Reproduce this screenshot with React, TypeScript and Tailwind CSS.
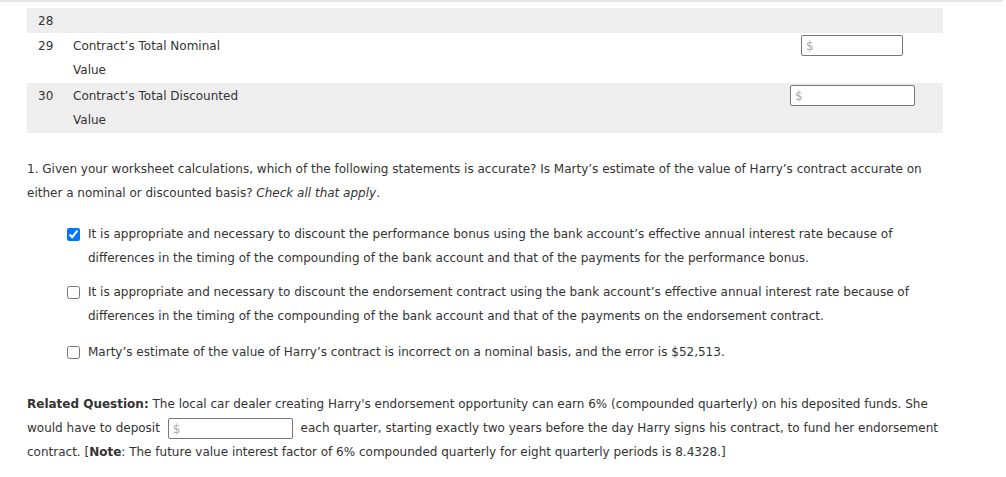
import React from "react";

const font = { fontFamily: '"DejaVu Sans", Verdana, sans-serif' };

function Dollar({ w }: { w: string }) {
  return (
    <div className={`${w} h-[21px] border border-[#777] rounded-[2px] bg-white flex items-center pl-[4px] text-[12px] text-[#aaa] leading-none`}>
      $
    </div>
  );
}

export default function App() {
  return (
    <div className="w-[1006px] h-[477px] bg-white text-[#333] text-[12px] overflow-hidden" style={font}>
      <div className="w-[1003px] h-[2px] bg-[#e6e6e6]" />
      <div className="ml-[27px] mt-[6px] w-[916px]">
        <div className="h-[25px] bg-[#eeeeee] flex items-center">
          <span className="pl-[11px] w-[46px] pt-[1px]">28</span>
        </div>
        <div className="h-[50px] bg-white flex">
          <span className="pl-[11px] w-[46px] leading-[24px] pt-[1px]">29</span>
          <div className="leading-[24px] w-[300px] pt-[1px]">Contract’s Total Nominal<br />Value</div>
          <div className="flex-1 flex justify-end pr-[40px] pt-[2px]">
            <Dollar w="w-[102px]" />
          </div>
        </div>
        <div className="h-[50px] bg-[#eeeeee] flex">
          <span className="pl-[11px] w-[46px] leading-[24px] pt-[1px]">30</span>
          <div className="leading-[24px] w-[300px] pt-[1px]">Contract’s Total Discounted<br />Value</div>
          <div className="flex-1 flex justify-end pr-[28px] pt-[2px]">
            <Dollar w="w-[125px]" />
          </div>
        </div>
      </div>

      <p className="ml-[27px] mt-[24px] leading-[24px] w-[920px]">
        1. Given your worksheet calculations, which of the following statements is accurate? Is Marty’s estimate of the value of Harry’s contract accurate on either a nominal or discounted basis? <i>Check all that apply</i>.
      </p>

      <div className="ml-[67px] mt-[17px] flex flex-col">
        <label className="flex">
          <input type="checkbox" defaultChecked className="w-[13px] h-[13px] mt-[6px] m-0 shrink-0" />
          <span className="ml-[8px] leading-[24px] w-[830px]">
            It is appropriate and necessary to discount the performance bonus using the bank account’s effective annual interest rate because of differences in the timing of the compounding of the bank account and that of the payments for the performance bonus.
          </span>
        </label>
        <label className="flex mt-[10px]">
          <input type="checkbox" className="w-[13px] h-[13px] mt-[6px] m-0 shrink-0" />
          <span className="ml-[8px] leading-[24px] w-[830px]">
            It is appropriate and necessary to discount the endorsement contract using the bank account’s effective annual interest rate because of differences in the timing of the compounding of the bank account and that of the payments on the endorsement contract.
          </span>
        </label>
        <label className="flex mt-[12px]">
          <input type="checkbox" className="w-[13px] h-[13px] mt-[6px] m-0 shrink-0" />
          <span className="ml-[8px] leading-[24px] w-[830px]">
            Marty’s estimate of the value of Harry’s contract is incorrect on a nominal basis, and the error is $52,513.
          </span>
        </label>
      </div>

      <p className="ml-[27px] mt-[28px] leading-[24px] w-[920px]">
        <b>Related Question:</b> The local car dealer creating Harry's endorsement opportunity can earn 6% (compounded quarterly) on his deposited funds. She would have to deposit{" "}
        <span className="inline-flex align-middle w-[125px] h-[21px] border border-[#777] rounded-[2px] items-center pl-[4px] text-[#aaa] text-[12px] leading-none mx-[4px]">$</span>{" "}
        each quarter, starting exactly two years before the day Harry signs his contract, to fund her endorsement contract. [<b>Note</b>: The future value interest factor of 6% compounded quarterly for eight quarterly periods is 8.4328.]
      </p>
    </div>
  );
}
